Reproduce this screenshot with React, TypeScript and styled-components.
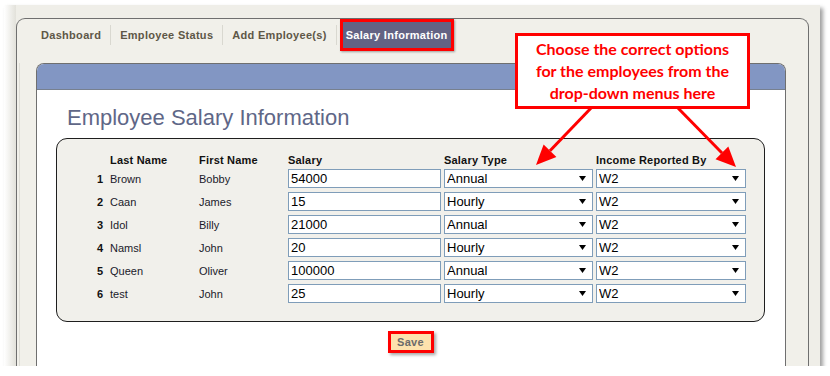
import React from "react";
import styled, { createGlobalStyle } from "styled-components";

const Global = createGlobalStyle`
  html, body { margin: 0; padding: 0; background: #ffffff; }
  body { font-family: "Liberation Sans", Arial, sans-serif; }
  * { box-sizing: border-box; }
`;

const Frame = styled.div`
  position: relative;
  margin: 5px 0 0 4px;
  width: 816px;
  height: 361px;
  padding: 13px 11px 0 12px;
  background: linear-gradient(to right, #ffffff 0px, #e2e1da 12px, #efeee8 12px);
  box-shadow: 3px 3px 4px rgba(0, 0, 0, 0.38);
  overflow: hidden;
  display: flex;
`;

const TabContainer = styled.div`
  flex: 1;
  display: flex;
  flex-direction: column;
  background: #f1f0ea;
  border: 1px solid #6f6f6f;
  border-bottom: none;
  border-radius: 9px 9px 0 0;
`;

const TabsRow = styled.div`
  height: 44px;
  display: flex;
  align-items: flex-start;
  padding-left: 15px;
`;

const Tab = styled.div<{ $active?: boolean }>`
  font-family: "Liberation Sans", Arial, sans-serif;
  font-weight: bold;
  font-size: 11px;
  letter-spacing: 0.3px;
  white-space: nowrap;
  ${(p) =>
    p.$active
      ? `
    margin: 0 0 0 3px;
    height: 32px;
    line-height: 26px;
    padding: 0 3px;
    color: #ffffff;
    background: #636384;
    border: 3px solid #ff0000;
    box-shadow: 1px 1px 2px rgba(0,0,0,0.35);
  `
      : `
    margin-top: 6px;
    height: 20px;
    line-height: 20px;
    padding: 0 9px;
    color: #5e5747;
    border-right: 1px solid #d9d8d0;
  `}
`;

const ContentArea = styled.div`
  flex: 1;
  display: flex;
  margin-left: 2px;
  border-left: 1px solid #dddcd5;
`;

const ContentPanel = styled.div`
  flex: 1;
  margin: 0 22px 0 16px;
  display: flex;
  flex-direction: column;
  background: #ffffff;
  border: 1px solid #6f6f6f;
  border-bottom: none;
  border-radius: 8px 8px 0 0;
  overflow: hidden;
`;

const BlueBar = styled.div`
  height: 26px;
  background: #8296c3;
  border-bottom: 1px solid #77808f;
`;

const PanelBody = styled.div`
  padding: 0 20px 0 19px;
  display: flex;
  flex-direction: column;
`;

const Title = styled.h1`
  margin: 15px 0 0 11px;
  font-family: "Liberation Sans", Arial, sans-serif;
  font-weight: normal;
  font-size: 22px;
  line-height: 26px;
  color: #5f6787;
`;

const TablePanel = styled.div`
  margin-top: 7px;
  background: #f1f0eb;
  border: 1px solid #1e1e1e;
  border-radius: 11px;
  padding: 15px 0 18px 0;
`;

const Grid = styled.div`
  display: grid;
  grid-template-columns: 53px 89px 89px 156px 152px 150px;
  grid-template-rows: 11px;
  grid-auto-rows: 19px;
  row-gap: 4px;
  align-items: center;
`;

const HeadCell = styled.div`
  font-family: "Liberation Sans", Arial, sans-serif;
  font-weight: bold;
  font-size: 11px;
  letter-spacing: 0.2px;
  color: #111111;
  align-self: start;
  line-height: 13px;
  white-space: nowrap;
`;

const HeaderRow = styled.div`
  display: contents;
`;

const Num = styled.div`
  text-align: right;
  padding-right: 7px;
  font-weight: bold;
  font-size: 11px;
  color: #111111;
`;

const Cell = styled.div`
  font-size: 11px;
  color: #1a1a2a;
  white-space: nowrap;
`;

const TextInput = styled.input`
  width: 153px;
  height: 19px;
  border: 1px solid #7f9db9;
  padding: 0 2px;
  font-family: "Liberation Sans", Arial, sans-serif;
  font-size: 13px;
  color: #000;
  background: #fff;
  outline: none;
`;

const SelectBox = styled.div<{ $w: number }>`
  width: ${(p) => p.$w}px;
  height: 19px;
  border: 1px solid #7f9db9;
  background: #fff;
  display: flex;
  align-items: center;
  padding: 0 6px 0 0;
`;

const NativeSelect = styled.select`
  flex: 1;
  min-width: 0;
  height: 17px;
  border: none;
  outline: none;
  background: transparent;
  appearance: none;
  -webkit-appearance: none;
  font-family: "Liberation Sans", Arial, sans-serif;
  font-size: 13px;
  color: #000;
  padding: 0 0 0 2px;
`;

const SaveRow = styled.div`
  display: flex;
  justify-content: center;
  margin-top: 9px;
`;

const SaveButton = styled.button`
  height: 22px;
  width: 46px;
  padding: 0;
  border: 3px solid #ff0000;
  background: #fde2ad;
  font-family: "Liberation Sans", Arial, sans-serif;
  font-weight: bold;
  font-size: 11px;
  letter-spacing: 0.3px;
  color: #6b6b6b;
  box-shadow: 2px 2px 3px rgba(0, 0, 0, 0.35);
`;

const Callout = styled.div`
  position: absolute;
  left: 511px;
  top: 28px;
  width: 235px;
  height: 76px;
  background: #ffffff;
  border: 3px solid #ff0000;
  display: flex;
  flex-direction: column;
  justify-content: center;
  align-items: center;
  font-family: Lato, "Liberation Sans", sans-serif;
  font-weight: bold;
  font-size: 16px;
  line-height: 22px;
  color: #ff0000;
  z-index: 3;
`;

const ArrowLayer = styled.svg`
  position: absolute;
  left: 0;
  top: 0;
  width: 816px;
  height: 361px;
  pointer-events: none;
  z-index: 2;
`;

const DownArrow = () => (
  <svg width="7" height="5" viewBox="0 0 7 5">
    <polygon points="0,0 7,0 3.5,5" fill="#000" />
  </svg>
);

type Row = { last: string; first: string; salary: string; type: string };

const rows: Row[] = [
  { last: "Brown", first: "Bobby", salary: "54000", type: "Annual" },
  { last: "Caan", first: "James", salary: "15", type: "Hourly" },
  { last: "Idol", first: "Billy", salary: "21000", type: "Annual" },
  { last: "Namsl", first: "John", salary: "20", type: "Hourly" },
  { last: "Queen", first: "Oliver", salary: "100000", type: "Annual" },
  { last: "test", first: "John", salary: "25", type: "Hourly" },
];

export default function App() {
  return (
    <>
      <Global />
      <Frame>
        <TabContainer>
          <TabsRow>
            <Tab>Dashboard</Tab>
            <Tab>Employee Status</Tab>
            <Tab>Add Employee(s)</Tab>
            <Tab $active>Salary Information</Tab>
          </TabsRow>
          <ContentArea>
            <ContentPanel>
              <BlueBar />
              <PanelBody>
                <Title>Employee Salary Information</Title>
                <TablePanel>
                  <Grid>
                    <HeaderRow>
                      <HeadCell />
                      <HeadCell>Last Name</HeadCell>
                      <HeadCell>First Name</HeadCell>
                      <HeadCell>Salary</HeadCell>
                      <HeadCell>Salary Type</HeadCell>
                      <HeadCell>Income Reported By</HeadCell>
                    </HeaderRow>
                    {rows.map((r, i) => (
                      <React.Fragment key={i}>
                        <Num>{i + 1}</Num>
                        <Cell>{r.last}</Cell>
                        <Cell>{r.first}</Cell>
                        <TextInput defaultValue={r.salary} />
                        <SelectBox $w={149}>
                          <NativeSelect defaultValue={r.type}>
                            <option>Annual</option>
                            <option>Hourly</option>
                          </NativeSelect>
                          <DownArrow />
                        </SelectBox>
                        <SelectBox $w={150}>
                          <NativeSelect defaultValue="W2">
                            <option>W2</option>
                            <option>1099</option>
                          </NativeSelect>
                          <DownArrow />
                        </SelectBox>
                      </React.Fragment>
                    ))}
                  </Grid>
                </TablePanel>
                <SaveRow>
                  <SaveButton>Save</SaveButton>
                </SaveRow>
              </PanelBody>
            </ContentPanel>
          </ContentArea>
        </TabContainer>
        <Callout>
          <span>Choose the correct options</span>
          <span>for the employees from the</span>
          <span>drop-down menus here</span>
        </Callout>
        <ArrowLayer viewBox="4 5 816 361">
          <line x1="593" y1="106" x2="550" y2="150.7" stroke="#ff0000" strokeWidth="3" />
          <polygon points="536,165 556.4,157 543.6,144.4" fill="#ff0000" />
          <line x1="676" y1="106" x2="722" y2="153" stroke="#ff0000" strokeWidth="3" />
          <polygon points="736,167 715.5,159.3 728.3,146.5" fill="#ff0000" />
        </ArrowLayer>
      </Frame>
    </>
  );
}
